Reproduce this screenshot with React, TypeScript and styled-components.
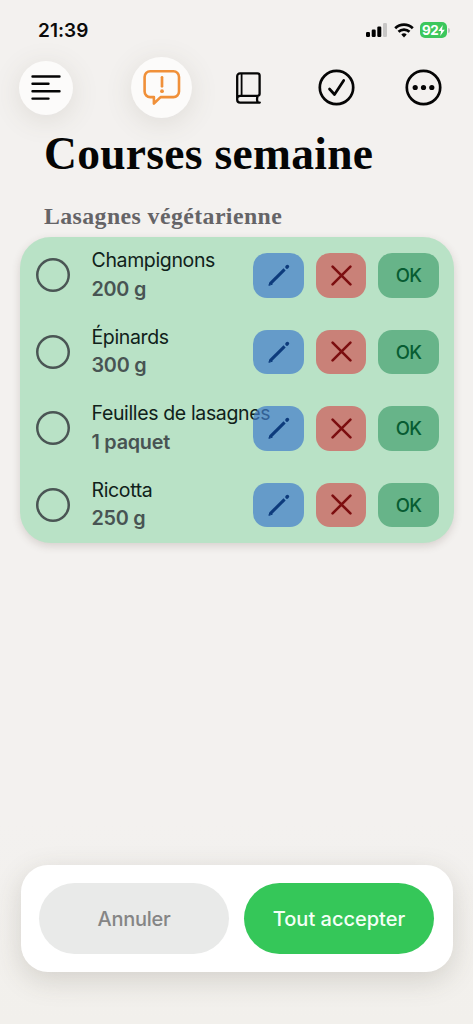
import React from 'react';
import styled, { createGlobalStyle } from 'styled-components';

const GlobalStyle = createGlobalStyle`
  * { box-sizing: border-box; }
  body { margin: 0; background: #f3f1ef; }
  button { border: 0; padding: 0; font: inherit; color: inherit; background: none; }
`;

const Screen = styled.div`
  width: 473px;
  height: 1024px;
  overflow: hidden;
  display: flex;
  flex-direction: column;
  background: linear-gradient(#f3f1ef 80%, #f2f0ec);
  font-family: Inter, 'Liberation Sans', sans-serif;
  color: #0b0b0b;
`;

const StatusBar = styled.header`
  height: 57px;
  flex: none;
  padding: 3px 23px 0 38px;
  display: flex;
  align-items: center;
  justify-content: space-between;
`;

const Time = styled.span`
  font-size: 19px;
  font-weight: 600;
  letter-spacing: 0.05px;
`;

const StatusIcons = styled.div`
  display: flex;
  align-items: center;
  gap: 7px;
  svg { display: block; }
`;

const BatteryWrap = styled.div`
  display: flex;
  align-items: center;
  gap: 1px;
  margin-left: -1px;
`;

const Battery = styled.div`
  width: 27px;
  height: 16px;
  padding-left: 2px;
  border-radius: 5px;
  background: #3cc75c;
  color: #fff;
  font-size: 13.5px;
  font-weight: 700;
  letter-spacing: -0.5px;
  display: flex;
  align-items: center;
`;

const BatteryTip = styled.div`
  width: 2px;
  height: 5px;
  border-radius: 0 2px 2px 0;
  background: #c4c4c4;
`;

const NavBar = styled.nav`
  height: 61px;
  flex: none;
  padding: 0 6px 0 19px;
  display: flex;
  align-items: center;
`;

const RoundButton = styled.button<{ $size: number }>`
  width: ${(p) => p.$size}px;
  height: ${(p) => p.$size}px;
  border-radius: 50%;
  background: #fcfbfa;
  display: flex;
  align-items: center;
  justify-content: center;
  box-shadow: 0 5px 28px rgba(90, 85, 60, 0.13);
`;

const Tabs = styled.div`
  flex: 1;
  margin-left: 45px;
  display: grid;
  grid-template-columns: repeat(4, 1fr);
  place-items: center;
  svg { display: block; }
`;

const Title = styled.h1`
  margin: 8px 0 0 44px;
  height: 57px;
  font: 700 45.5px/56px 'Liberation Serif', serif;
  letter-spacing: 0.3px;
  color: #050505;
  white-space: nowrap;
`;

const Subtitle = styled.h2`
  margin: 19px 0 0 44px;
  height: 35px;
  font: 700 23.8px/28px 'Liberation Serif', serif;
  letter-spacing: 0.42px;
  color: #656467;
  white-space: nowrap;
`;

const Card = styled.ul`
  list-style: none;
  margin: 0 19.5px;
  padding: 0 14.5px 0 16.5px;
  height: 306px;
  border-radius: 31px;
  background: #b9e2c6;
  box-shadow: 0 3px 8px rgba(70, 45, 40, 0.17);
  display: grid;
  grid-template-columns: minmax(0, 1fr);
  grid-template-rows: repeat(4, 1fr);
`;

const Row = styled.li`
  display: flex;
  align-items: center;
`;

const Check = styled.span`
  width: 34px;
  height: 34px;
  flex: none;
  border-radius: 50%;
  box-shadow: inset 0 0 0 2.5px #4a5554;
`;

const ItemText = styled.div`
  flex: 1;
  min-width: 0;
  margin-left: 21.5px;
  padding-bottom: 1px;
  white-space: nowrap;
  line-height: 28.5px;
`;

const Name = styled.div`
  font-size: 19.5px;
  letter-spacing: -0.36px;
  color: #10211a;
`;

const Quantity = styled.div`
  font-size: 19.8px;
  font-weight: 600;
  letter-spacing: -0.25px;
  color: #485453;
`;

const Actions = styled.div`
  flex: none;
  display: flex;
  gap: 12px;
  position: relative;
`;

const Action = styled.button<{ $bg: string; $fg: string; $w: number }>`
  width: ${(p) => p.$w}px;
  height: 44.5px;
  border-radius: 14px;
  background: ${(p) => p.$bg};
  color: ${(p) => p.$fg};
  display: flex;
  align-items: center;
  justify-content: center;
  font-size: 18.5px;
  font-weight: 550;
  letter-spacing: -0.8px;
`;

const Footer = styled.footer`
  margin: auto 20.5px 52px;
  height: 107px;
  padding: 18px 18.5px;
  border-radius: 27px;
  background: #fff;
  box-shadow: 0 8px 28px rgba(70, 65, 50, 0.18);
  display: grid;
  grid-template-columns: 1fr 1fr;
  gap: 15px;
`;

const FooterButton = styled.button<{ $primary?: boolean }>`
  height: 70.5px;
  padding-top: 1px;
  border-radius: 36px;
  background: ${(p) => (p.$primary ? '#35c759' : '#e9eae9')};
  color: ${(p) => (p.$primary ? '#f4fff6' : '#858585')};
  font-size: 20px;
  font-weight: 500;
  letter-spacing: ${(p) => (p.$primary ? '0' : '-0.25px')};
  white-space: nowrap;
`;

const items = [
  ['Champignons', '200 g'],
  ['Épinards', '300 g'],
  ['Feuilles de lasagnes', '1 paquet'],
  ['Ricotta', '250 g'],
];

const Signal = () => (
  <svg width="21" height="14" viewBox="0 0 21 14">
    <rect x="0" y="9" width="4" height="5" rx="1.2" />
    <rect x="5.7" y="6.5" width="4" height="7.5" rx="1.2" />
    <rect x="11.3" y="3.5" width="4" height="10.5" rx="1.2" />
    <rect x="17" y="0" width="4" height="14" rx="1.2" fill="#c7c6c5" />
  </svg>
);

const Wifi = () => (
  <svg width="20" height="15" viewBox="0 0 20 15" fill="none" stroke="#050505" strokeWidth="2.7">
    <path d="M1.2 5.2a12.7 12.7 0 0 1 17.6 0" />
    <path d="M4.5 8.8a8 8 0 0 1 11 0" />
    <path d="M7.3 11.6a4 4 0 0 1 5.4 0L10 14.4Z" fill="#050505" stroke="none" />
  </svg>
);

const Bolt = () => (
  <svg width="7" height="11" viewBox="0 0 7 11" fill="#fff">
    <path d="M4.8 0 0.3 6.1h2.8L2.2 11 6.8 4.7H4z" />
  </svg>
);

const MenuIcon = () => (
  <svg width="30" height="27" viewBox="0 0 30 27" stroke="#050505" strokeWidth="2.4" strokeLinecap="round">
    <path d="M1.5 2.5h27M1.5 9.8h16M1.5 17.2h27M1.5 24.6h16" />
  </svg>
);

const BubbleIcon = () => (
  <svg width="38" height="36" viewBox="0 0 38 36" fill="none" stroke="#f09039" strokeWidth="2.6" strokeLinecap="round" strokeLinejoin="round">
    <path d="M7.2 1.3h23.2a5.6 5.6 0 0 1 5.6 5.6v14.6a5.6 5.6 0 0 1-5.6 5.6H17.6l-6.7 6.4v-6.4H7.2a5.6 5.6 0 0 1-5.6-5.6V6.9a5.6 5.6 0 0 1 5.6-5.6Z" />
    <path d="M19 7.3v9" strokeWidth="2.7" />
    <circle cx="19" cy="21.2" r="1.9" fill="#f09039" stroke="none" />
  </svg>
);

const BookIcon = () => (
  <svg width="25" height="32" viewBox="0 0 25 32" fill="none" stroke="#050505" strokeWidth="2.3" strokeLinecap="round" strokeLinejoin="round">
    <path d="M4 1.4h17.4a2.2 2.2 0 0 1 2.2 2.2v18.2q0 2-2.2 2H4.3A3 3 0 0 0 1.2 27V4.2A2.8 2.8 0 0 1 4 1.4ZM1.2 27v.7A2.9 2.9 0 0 0 4.1 30.6h19.7M21.8 24c-.8 1.6-.8 4.7 0 6.4" />
    <path d="M5.6 1.8v22" strokeWidth="1.8" />
  </svg>
);

const CheckIcon = () => (
  <svg width="37" height="37" viewBox="0 0 37 37" fill="none" stroke="#050505" strokeWidth="2.7" strokeLinecap="round" strokeLinejoin="round">
    <circle cx="18.5" cy="18.5" r="16.7" />
    <path d="m11.500 20 5 5.500 9.200-14" />
  </svg>
);

const MoreIcon = () => (
  <svg width="37" height="37" viewBox="0 0 37 37" fill="none" stroke="#050505" strokeWidth="2.7">
    <circle cx="18.5" cy="18.5" r="16.7" />
    <g fill="#050505" stroke="none">
      <circle cx="10.2" cy="18.5" r="2.6" />
      <circle cx="18.5" cy="18.5" r="2.6" />
      <circle cx="26.8" cy="18.5" r="2.6" />
    </g>
  </svg>
);

const PencilIcon = () => (
  <svg width="22" height="22" viewBox="0 0 22 22" fill="none" stroke="#0d3b7c" strokeLinecap="round" strokeLinejoin="round">
    <path d="M2.8 19.1 16.6 5.3" strokeWidth="3.1" strokeLinecap="butt" />
    <path d="m1 21 1-2.900 2 1.900Z" fill="#0d3b7c" strokeWidth="1" />
    <path d="m19 3 .4-.4" strokeWidth="3.600" />
  </svg>
);

const CrossIcon = () => (
  <svg width="21" height="21" viewBox="0 0 21 21" stroke="#7c0e10" strokeWidth="2.6" strokeLinecap="round">
    <path d="m1.600 1.600 17.800 17.800M19.400 1.600 1.600 19.400" />
  </svg>
);

export default function App() {
  return (
    <>
      <GlobalStyle />
      <Screen>
        <StatusBar>
          <Time>21:39</Time>
          <StatusIcons>
            <Signal />
            <Wifi />
            <BatteryWrap>
              <Battery>92<Bolt /></Battery>
              <BatteryTip />
            </BatteryWrap>
          </StatusIcons>
        </StatusBar>
        <NavBar>
          <RoundButton $size={54} aria-label="Menu"><MenuIcon /></RoundButton>
          <Tabs>
            <RoundButton $size={61} aria-label="Suggestions"><BubbleIcon /></RoundButton>
            <BookIcon />
            <CheckIcon />
            <MoreIcon />
          </Tabs>
        </NavBar>
        <Title>Courses semaine</Title>
        <Subtitle>Lasagnes végétarienne</Subtitle>
        <Card>
          {items.map(([name, quantity]) => (
            <Row key={name}>
              <Check />
              <ItemText>
                <Name>{name}</Name>
                <Quantity>{quantity}</Quantity>
              </ItemText>
              <Actions>
                <Action $w={51} $bg="rgba(65, 125, 203, 0.7)" $fg="#0d3b7c" aria-label="Modifier"><PencilIcon /></Action>
                <Action $w={50} $bg="#c98178" $fg="#7c0e10" aria-label="Supprimer"><CrossIcon /></Action>
                <Action $w={61} $bg="#67b489" $fg="#075c32">OK</Action>
              </Actions>
            </Row>
          ))}
        </Card>
        <Footer>
          <FooterButton>Annuler</FooterButton>
          <FooterButton $primary>Tout accepter</FooterButton>
        </Footer>
      </Screen>
    </>
  );
}
